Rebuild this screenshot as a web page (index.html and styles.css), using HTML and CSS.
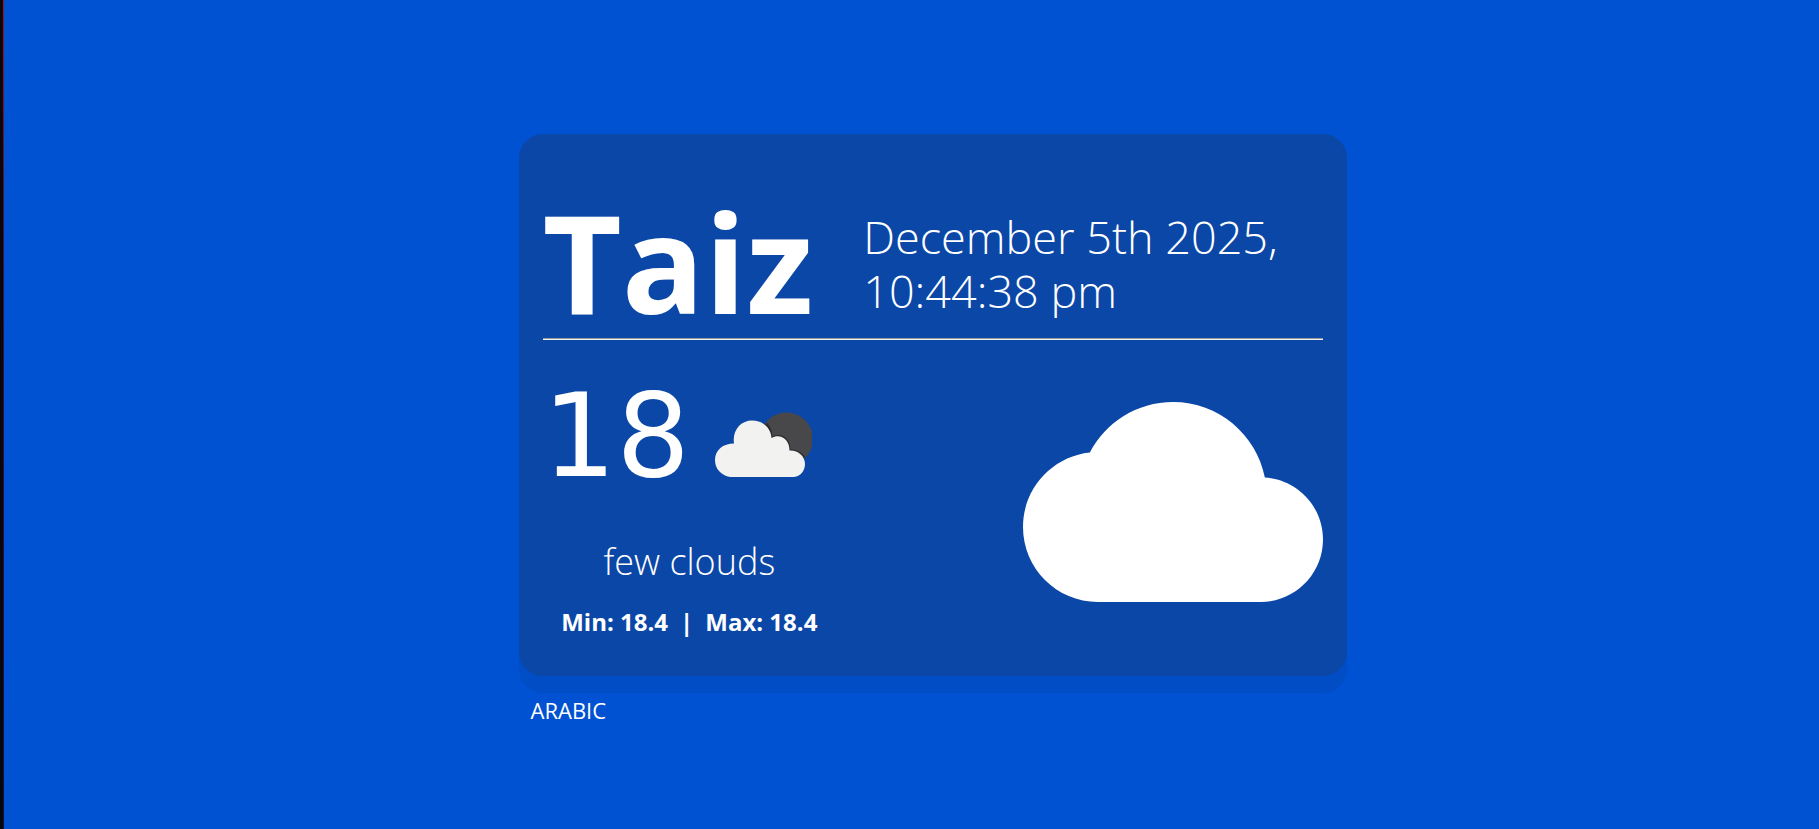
FILE: index.html
```html
<!DOCTYPE html>
<html lang="en">
<head>
<meta charset="utf-8">
<title>Weather</title>
<link rel="stylesheet" href="styles.css">
</head>
<body>
<main class="page">
  <div class="container">
    <section class="card">
      <header class="card-header">
        <h1 class="city">Taiz</h1>
        <p class="date">December 5th 2025, 10:44:38 pm</p>
      </header>
      <hr class="divider">
      <div class="card-body">
        <div class="details">
          <div class="temp-row">
            <span class="temp">18</span>
            <svg class="condition" viewBox="0 0 100 100" role="img" aria-label="few clouds">
              <circle cx="74.500" cy="39" r="26.500" fill="#48484a"/>
              <path fill="#2e2e31" d="M54 22.500C58 25 60.500 31 60.500 36.500C69 32 78.500 38 78.500 49.500C85 49.500 90 52 93 57L90 62L70 60L50 40z"/>
              <path fill="#f2f2f1" d="M18 77A17 17 0 0 1 3 60C3 50 11 43.500 22 43.500C20 30 29 20.500 40 20.500C51 20.500 59 28 59.500 38C68 33 77.500 39 77.500 50.500C86 50 93 56 93 64c0 7-5 13-12 13z"/>
            </svg>
          </div>
          <p class="description">few clouds</p>
          <div class="range"><span>Min: 18.4</span><span>|</span><span>Max: 18.4</span></div>
        </div>
        <svg class="cloud" viewBox="0 0 24 24" aria-hidden="true">
          <path fill="#fff" d="M19.350 10.040C18.670 6.590 15.640 4 12 4 9.110 4 6.600 5.640 5.350 8.040 2.340 8.360 0 10.910 0 14c0 3.310 2.690 6 6 6h13c2.760 0 5-2.240 5-5 0-2.640-2.050-4.780-4.650-4.960z"/>
        </svg>
      </div>
    </section>
    <button class="language" type="button">ARABIC</button>
  </div>
</main>
</body>
</html>
```
FILE: styles.css
```css
* {
  box-sizing: border-box;
}

body {
  margin: 0;
  color: #fff;
  background: #0052d2;
  font-family: "Open Sans", "Noto Sans", sans-serif;
}

.page {
  min-height: 100vh;
  display: flex;
  align-items: center;
  justify-content: center;
  padding: 60px 24px 24px;
  background:
    linear-gradient(#08080c, #08080c) left / 3px 100% no-repeat,
    linear-gradient(#a01038, #3a1040 30%, #101040) left / 4px 100% no-repeat;
}

.container {
  width: 100%;
  max-width: 828px;
  margin-left: 46px;
}

.card {
  padding: 24px;
  border-radius: 24px;
  background: #0b47a7;
  box-shadow: 0 17px 0 #004dc5;
}

.card-header {
  display: flex;
  align-items: flex-end;
  gap: 50px;
}

.city {
  margin: 0;
  padding-top: 38px;
  font-size: 137px;
  font-weight: 700;
  line-height: 130px;
}

.date {
  margin: 0 0 8px;
  font-size: 45px;
  font-weight: 300;
  line-height: 54px;
}

.divider {
  margin: 12px 0;
  border: 0;
  border-top: 1px solid #9a9a9a;
  border-bottom: 1px solid #eeeeee;
}

.card-body {
  display: flex;
  justify-content: space-between;
}

.details {
  display: flex;
  flex-direction: column;
  align-items: center;
}

.temp-row {
  display: flex;
  align-items: center;
  gap: 22px;
  padding-right: 24px;
}

.temp {
  font-family: "DejaVu Sans", sans-serif;
  font-size: 116px;
  line-height: 168px;
}

.condition {
  width: 100px;
  height: 100px;
  margin-top: 28px;
}

.description {
  margin: 0;
  font-size: 36px;
  font-weight: 300;
  line-height: 84px;
}

.range {
  display: flex;
  gap: 12px;
  font-size: 24px;
  font-weight: 700;
  line-height: 36px;
}

.cloud {
  width: 300px;
  height: 300px;
}

.language {
  display: block;
  margin-top: 16px;
  padding: 4px 12px 8px;
  border: 0;
  background: none;
  color: #fff;
  font: 400 22px/28px "Open Sans", "Noto Sans", sans-serif;
}
```
